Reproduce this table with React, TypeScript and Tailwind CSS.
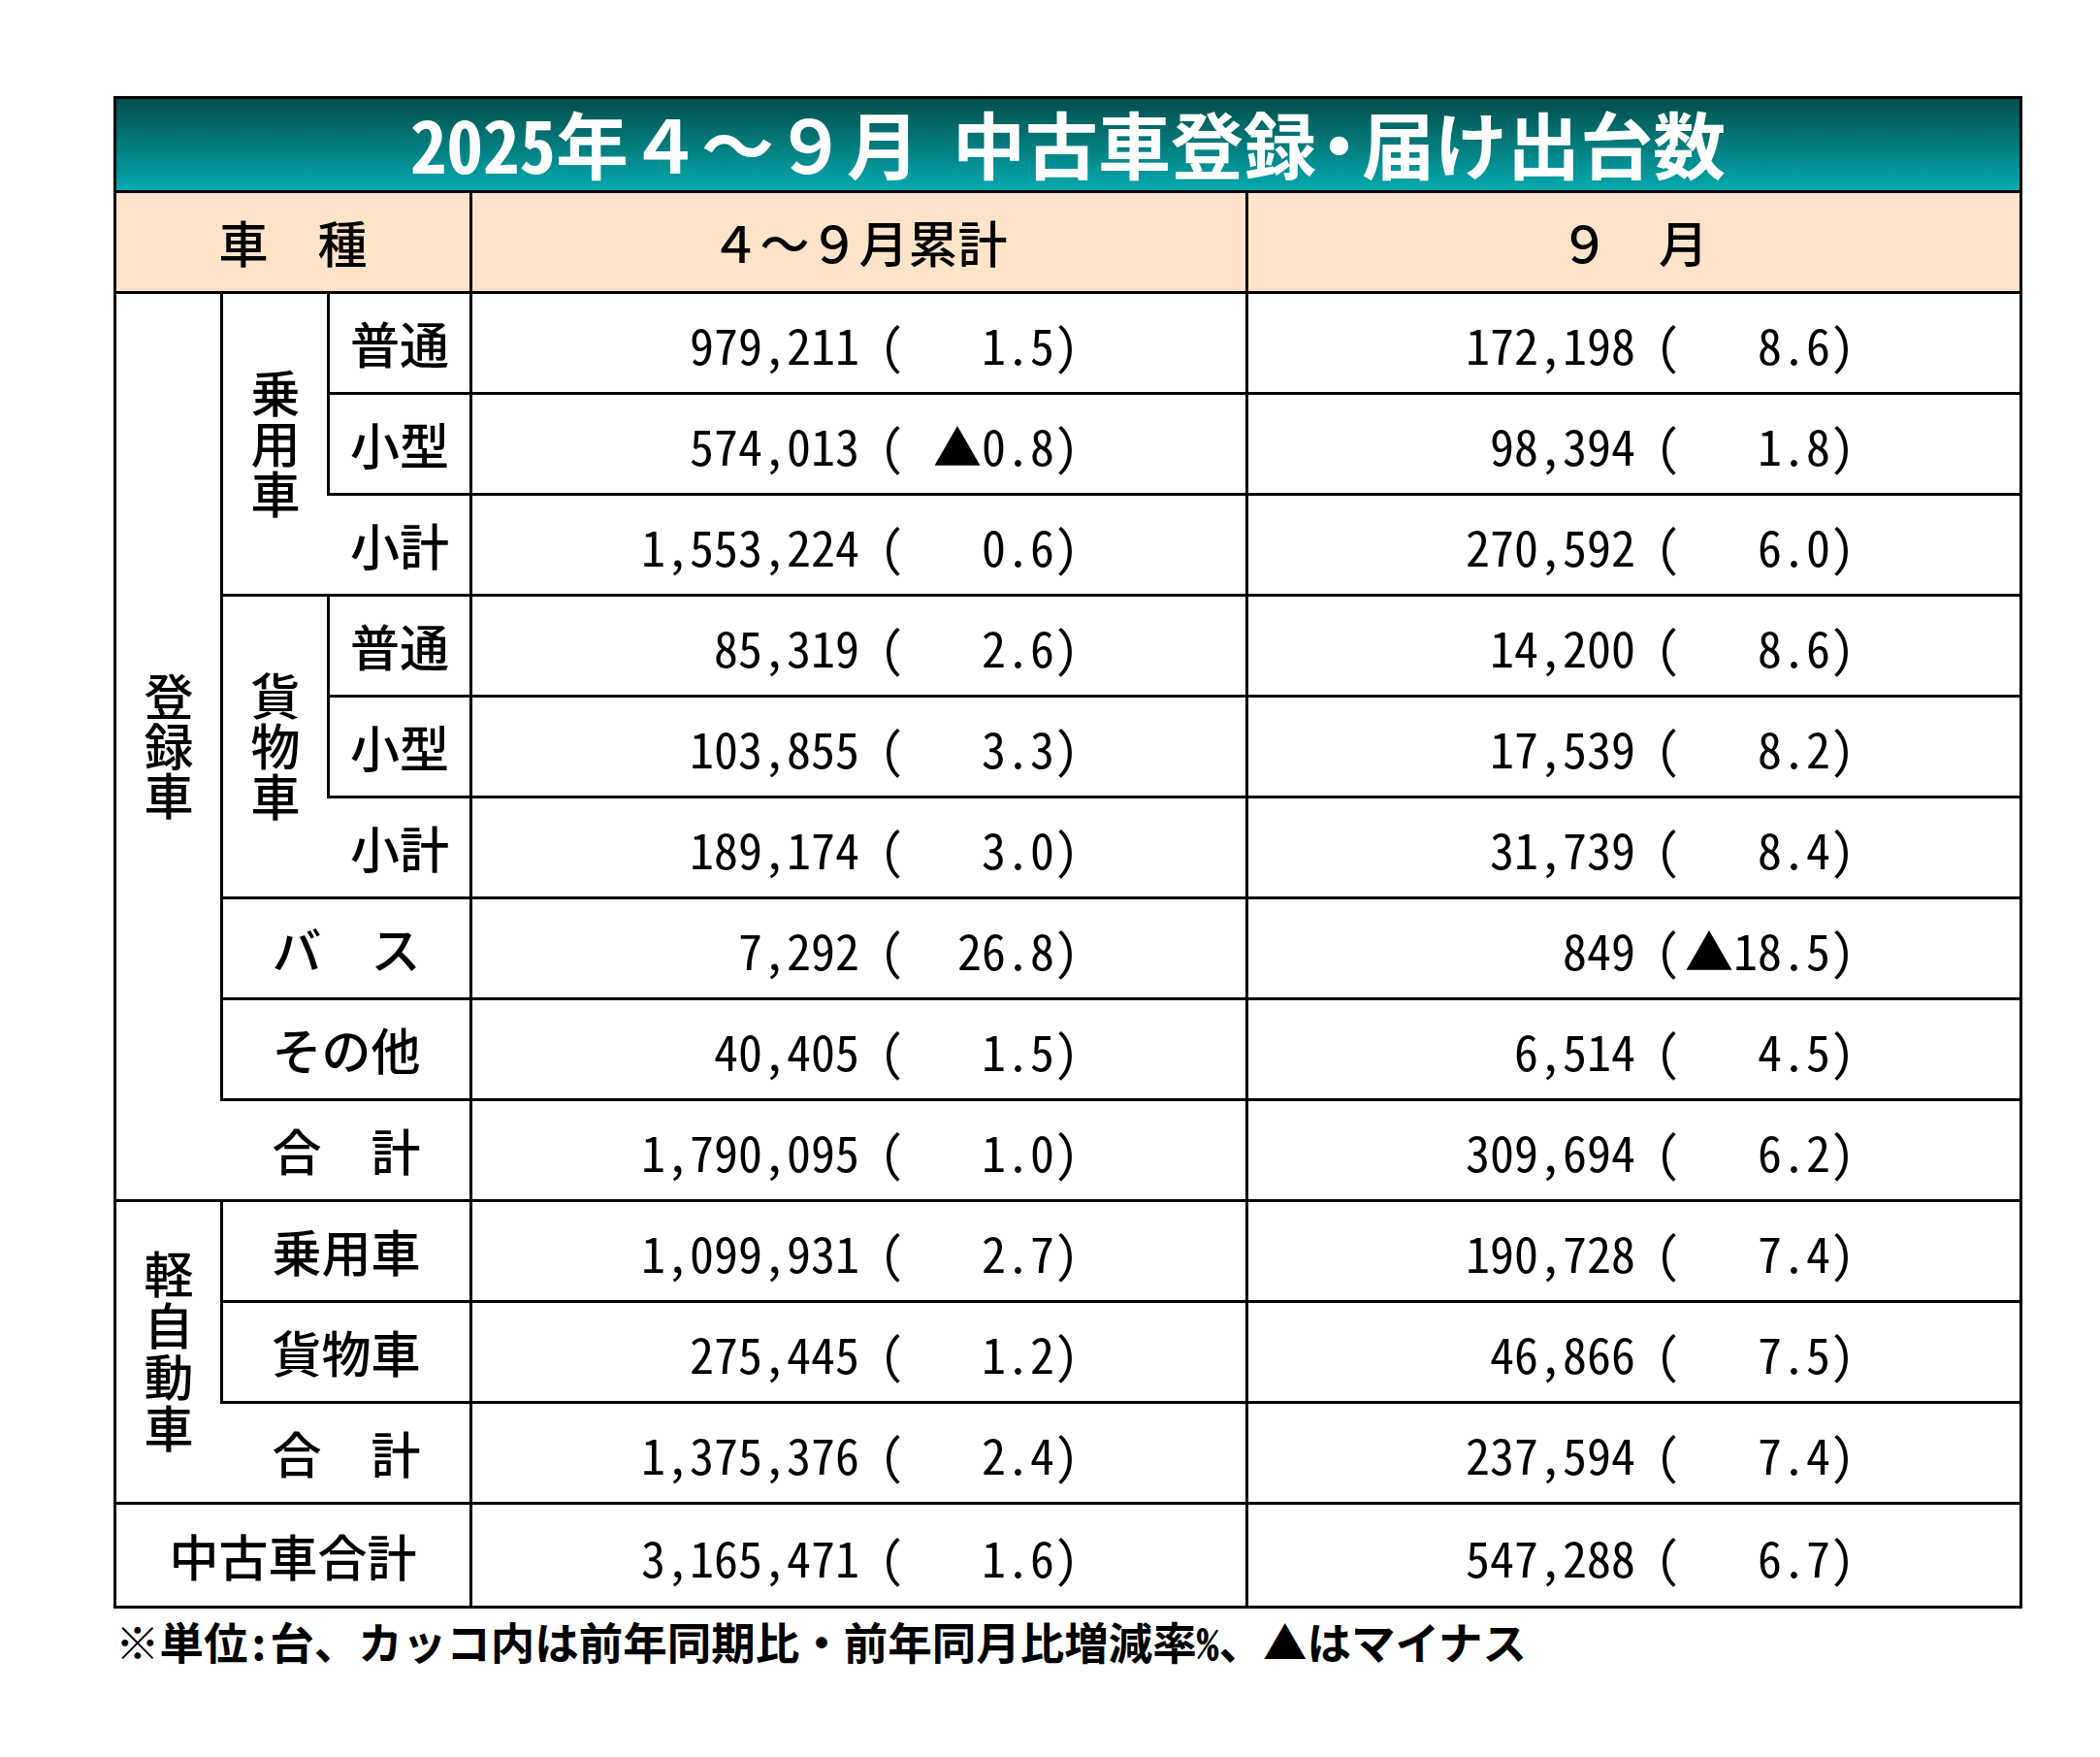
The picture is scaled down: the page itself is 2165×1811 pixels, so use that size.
import React from "react";

const ROW = [
  "row-start-3",
  "row-start-4",
  "row-start-5",
  "row-start-6",
  "row-start-7",
  "row-start-8",
  "row-start-9",
  "row-start-10",
  "row-start-11",
  "row-start-12",
  "row-start-13",
  "row-start-14",
  "row-start-15",
];

const data: [string, string, string, string][] = [
  ["979,211", "1.5", "172,198", "8.6"],
  ["574,013", "▲0.8", "98,394", "1.8"],
  ["1,553,224", "0.6", "270,592", "6.0"],
  ["85,319", "2.6", "14,200", "8.6"],
  ["103,855", "3.3", "17,539", "8.2"],
  ["189,174", "3.0", "31,739", "8.4"],
  ["7,292", "26.8", "849", "▲18.5"],
  ["40,405", "1.5", "6,514", "4.5"],
  ["1,790,095", "1.0", "309,694", "6.2"],
  ["1,099,931", "2.7", "190,728", "7.4"],
  ["275,445", "1.2", "46,866", "7.5"],
  ["1,375,376", "2.4", "237,594", "7.4"],
  ["3,165,471", "1.6", "547,288", "6.7"],
];

function Num({ n, v }: { n: string; v: string }) {
  const neg = v.startsWith("▲");
  return (
    <div className="flex h-full items-center pt-[1px] text-[50px] leading-none [font-feature-settings:'hwid'] whitespace-pre">
      <span className="w-[399px] text-right">{n}</span>
      <span className="w-[46px] text-right">(</span>
      <span className="w-[155px] text-right">
        {neg ? (
          <>
            <span className="[font-feature-settings:normal]">▲</span>
            {v.slice(1)}
          </>
        ) : (
          v
        )}
      </span>
      <span className="w-[25px]">)</span>
    </div>
  );
}

function VLabel({ text, gap }: { text: string; gap: string }) {
  return (
    <div className="flex h-full items-center justify-center">
      <span className={`text-[51px] font-medium leading-none [writing-mode:vertical-rl] ${gap}`}>{text}</span>
    </div>
  );
}

function Label({ text }: { text: string }) {
  return (
    <div className="flex h-full items-center justify-center text-[51px] leading-none font-medium whitespace-pre">
      {text}
    </div>
  );
}

export default function App() {
  const B = "border-black";
  return (
    <div className="min-h-[1811px] w-[2165px] bg-white pl-[117px] pt-[99px] font-['Noto_Sans_CJK_JP','Noto_Sans',sans-serif] text-black">
      <div className="grid w-[1968px] grid-cols-[107px_110px_147px_800px_798px] grid-rows-[97px_104px_repeat(13,104px)] border-[3px] border-black">
        {/* title */}
        <div className="col-span-5 col-start-1 row-start-1 flex items-center justify-center border-b-[3px] border-black bg-linear-to-b from-[#024f4d] to-[#02aab0] pb-[6px] text-[75px] font-bold leading-none text-white whitespace-pre">
          <span className="[font-feature-settings:'hwid']">2025</span>
          <span>年４～９月</span>
          <span className="inline-block w-[34px]" />
          <span>中古車登</span>
          <span className="tracking-[-14px]">録・</span>
          <span>届け出台数</span>
        </div>

        {/* header */}
        <div className={`col-span-3 col-start-1 row-start-2 border-b-[3px] ${B} bg-[#fde3c8]`}>
          <Label text="車　種" />
        </div>
        <div className={`col-start-4 row-start-2 border-b-[3px] border-l-[3px] ${B} bg-[#fde3c8]`}>
          <Label text="４～９月累計" />
        </div>
        <div className={`col-start-5 row-start-2 border-b-[3px] border-l-[3px] ${B} bg-[#fde3c8]`}>
          <Label text="９　月" />
        </div>

        {/* 登録車 */}
        <div className={`col-start-1 row-span-9 row-start-3 border-b-[3px] ${B}`}>
          <VLabel text="登録車" gap="tracking-[0px]" />
        </div>
        <div className={`col-start-2 row-span-3 row-start-3 border-b-[3px] border-l-[3px] ${B}`}>
          <VLabel text="乗用車" gap="tracking-[1px]" />
        </div>
        <div className={`col-start-3 row-start-3 border-b-[3px] border-l-[3px] ${B}`}>
          <Label text="普通" />
        </div>
        <div className={`col-start-3 row-start-4 border-b-[3px] border-l-[3px] ${B}`}>
          <Label text="小型" />
        </div>
        <div className={`col-start-3 row-start-5 border-b-[3px] pl-[3px] ${B}`}>
          <Label text="小計" />
        </div>

        <div className={`col-start-2 row-span-3 row-start-6 border-b-[3px] border-l-[3px] ${B}`}>
          <VLabel text="貨物車" gap="tracking-[1px]" />
        </div>
        <div className={`col-start-3 row-start-6 border-b-[3px] border-l-[3px] ${B}`}>
          <Label text="普通" />
        </div>
        <div className={`col-start-3 row-start-7 border-b-[3px] border-l-[3px] ${B}`}>
          <Label text="小型" />
        </div>
        <div className={`col-start-3 row-start-8 border-b-[3px] pl-[3px] ${B}`}>
          <Label text="小計" />
        </div>

        <div className={`col-span-2 col-start-2 row-start-9 border-b-[3px] border-l-[3px] ${B}`}>
          <Label text="バ　ス" />
        </div>
        <div className={`col-span-2 col-start-2 row-start-10 border-b-[3px] border-l-[3px] ${B}`}>
          <Label text="その他" />
        </div>
        <div className={`col-span-2 col-start-2 row-start-11 border-b-[3px] pl-[3px] ${B}`}>
          <Label text="合　計" />
        </div>

        {/* 軽自動車 */}
        <div className={`col-start-1 row-span-3 row-start-12 border-b-[3px] ${B}`}>
          <VLabel text="軽自動車" gap="tracking-[2px]" />
        </div>
        <div className={`col-span-2 col-start-2 row-start-12 border-b-[3px] border-l-[3px] ${B}`}>
          <Label text="乗用車" />
        </div>
        <div className={`col-span-2 col-start-2 row-start-13 border-b-[3px] border-l-[3px] ${B}`}>
          <Label text="貨物車" />
        </div>
        <div className={`col-span-2 col-start-2 row-start-14 border-b-[3px] pl-[3px] ${B}`}>
          <Label text="合　計" />
        </div>

        <div className={`col-span-3 col-start-1 row-start-15`}>
          <Label text="中古車合計" />
        </div>

        {data.map((r, i) => {
          const last = i === data.length - 1;
          return (
            <React.Fragment key={i}>
              <div className={`col-start-4 ${ROW[i]} border-l-[3px] ${last ? "" : "border-b-[3px]"} ${B}`}>
                <Num n={r[0]} v={r[1]} />
              </div>
              <div className={`col-start-5 ${ROW[i]} border-l-[3px] ${last ? "" : "border-b-[3px]"} ${B}`}>
                <Num n={r[2]} v={r[3]} />
              </div>
            </React.Fragment>
          );
        })}
      </div>
      <div className="mt-[11px] pl-[2px] text-[45.5px] font-bold leading-none whitespace-pre [font-feature-settings:'hwid']">
        ※単位:台、カッコ内は前年同期比・前年同月比増減率%、▲はマイナス
      </div>
    </div>
  );
}
